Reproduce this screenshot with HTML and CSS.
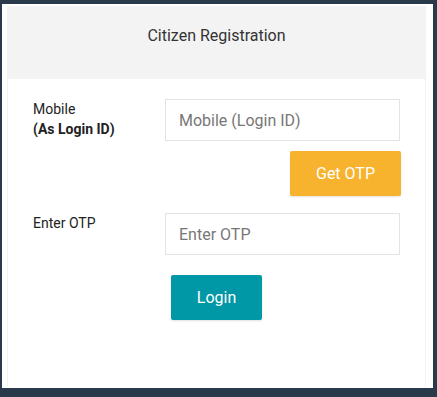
FILE: index.html
```html
<!DOCTYPE html>
<html>
<head>
<meta charset="utf-8">
<link rel="stylesheet" href="styles.css">
</head>
<body>
<div class="card">
  <div class="inner">
    <div class="header">Citizen Registration</div>
    <div class="body">
      <div class="row">
        <div class="label">Mobile<br><b>(As Login ID)</b></div>
        <div class="field">
          <input class="input" type="text" placeholder="Mobile (Login ID)">
          <div class="actions"><button class="btn btn-otp">Get OTP</button></div>
        </div>
      </div>
      <div class="row row-otp">
        <div class="label">Enter OTP</div>
        <div class="field">
          <input class="input" type="text" placeholder="Enter OTP">
        </div>
      </div>
      <div class="login-wrap"><button class="btn btn-login">Login</button></div>
    </div>
  </div>
</div>
</body>
</html>
```
FILE: styles.css
```css
* { box-sizing: border-box; }
html, body { margin: 0; padding: 0; }
body {
  background: #2b3a4b;
  width: 437px;
  height: 397px;
  overflow: hidden;
  font-family: Roboto, "Liberation Sans", sans-serif;
  padding: 4px 4px 0 2px;
}
.card {
  background: #fff;
  width: 431px;
  height: 384px;
  padding: 2px 7px 1px 5px;
}
.inner {
  height: 100%;
  border-left: 1px solid #f2f2f2;
  border-right: 1px solid #f2f2f2;
}
.header {
  background: #f3f3f3;
  height: 73px;
  text-align: center;
  font-size: 16px;
  line-height: 20px;
  color: #333;
  padding-top: 20px;
}
.body {
  padding: 20px 0 0 25px;
}
.row {
  display: flex;
}
.label {
  width: 132px;
  font-size: 14px;
  line-height: 20px;
  color: #222;
}
.label b { font-weight: 700; }
.field {
  width: 235px;
  display: flex;
  flex-direction: column;
}
.input {
  width: 235px;
  height: 42px;
  border: 1px solid #e3e3e3;
  border-radius: 0;
  padding: 0 13px;
  font-family: Roboto, "Liberation Sans", sans-serif;
  font-size: 16px;
  color: #555;
  outline: none;
}
.input::placeholder { color: #777; }
.actions {
  display: flex;
  justify-content: flex-end;
  margin-top: 10px;
  margin-right: -1px;
}
.btn {
  border: none;
  border-radius: 2px;
  height: 45px;
  font-family: Roboto, "Liberation Sans", sans-serif;
  font-size: 16px;
  color: #fff;
  padding: 0;
  box-shadow: 0 1px 2px rgba(0,0,0,0.12);
}
.btn-otp {
  width: 111px;
  background: #f8b32e;
}
.row-otp { margin-top: 17px; }
.row-otp .label { padding-top: 0; }
.login-wrap {
  margin-top: 20px;
  padding-left: 138px;
}
.btn-login {
  width: 91px;
  background: #0098a6;
}
```
